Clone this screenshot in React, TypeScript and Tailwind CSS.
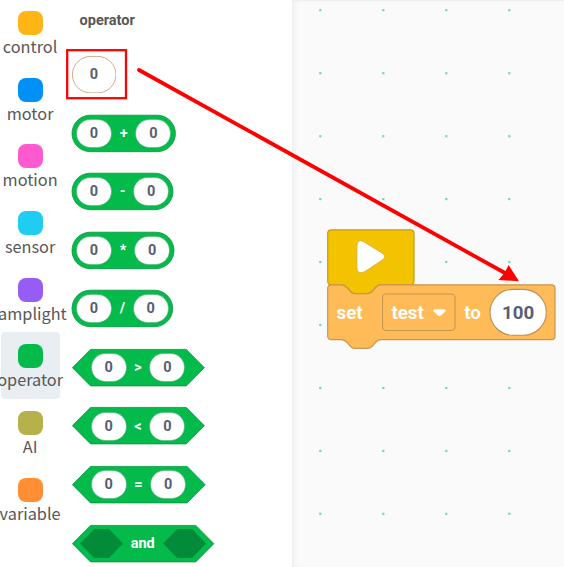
import React from "react";

const categories = [
  { label: "control", color: "bg-[#ffb515]" },
  { label: "motor", color: "bg-[#0190f8]" },
  { label: "motion", color: "bg-[#fd5ad0]" },
  { label: "sensor", color: "bg-[#1fcdf3]" },
  { label: "lamplight", color: "bg-[#965cf6]" },
  { label: "operator", color: "bg-[#03ba4b]", active: true },
  { label: "AI", color: "bg-[#b6b14a]" },
  { label: "variable", color: "bg-[#ff8e35]" },
];

function Sidebar() {
  return (
    <nav className="relative z-10 -mt-px flex w-[61px] shrink-0 flex-col pl-[0.6px] font-['Noto_Sans_CJK_SC',sans-serif]">
      {categories.map((c) => (
        <div
          key={c.label}
          className={`flex h-[66.7px] w-[59px] shrink-0 flex-col items-center rounded-[4px] ${c.active ? "bg-[#e9eef2]" : ""}`}
        >
          <div className={`mt-[12px] h-[24px] w-[25px] shrink-0 rounded-[8px] ${c.color}`} />
          <span className="whitespace-nowrap text-[16.3px] leading-[22px] text-[#575757]">{c.label}</span>
        </div>
      ))}
    </nav>
  );
}

function Slot() {
  return (
    <div className="relative flex h-[29px] w-[36px] shrink-0 items-center justify-center">
      <svg className="absolute inset-0" width="36" height="29">
        <rect x="0.3" y="0.3" width="35.4" height="28.4" rx="14.2" fill="#fff" stroke="#0b9a43" strokeWidth="0.6" />
      </svg>
      <span className="relative pt-[1.6px] text-[14.5px] font-bold leading-none text-[#575e75]">0</span>
    </div>
  );
}

function HexSlot() {
  return (
    <svg width="43" height="29" className="relative shrink-0">
      <path d="M14.3 0H29L43 14.5L29 29H14.3L0 14.5Z" fill="#048b3a" />
    </svg>
  );
}

function Block({ op, width, kind = "round" }: { op: string; width: number; kind?: "round" | "compare" | "logic" }) {
  const w = width;
  const pad = kind === "round" ? "px-[4.3px]" : kind === "compare" ? "px-[19px]" : "px-[8px]";
  return (
    <div className={`relative flex h-[37.3px] items-center justify-between ${pad}`} style={{ width: w }}>
      <svg className="absolute inset-0 overflow-visible" width={w} height="37.3">
        {kind === "round" ? (
          <rect x="0" y="0.2" width={w - 0.8} height="36.5" rx="18.25" fill="#03ba4b" stroke="#079640" strokeWidth="0.8" />
        ) : (
          <path d={`M18.5 0.4H${w - 18.5}L${w - 0.4} 18.65L${w - 18.5} 36.9H18.5L0.4 18.65Z`} fill="#03ba4b" stroke="#079640" strokeWidth="0.8" />
        )}
      </svg>
      {kind === "logic" ? <HexSlot /> : <Slot />}
      <span className="relative pt-[1.6px] text-[14.5px] font-bold leading-none text-white">{op}</span>
      {kind === "logic" ? <HexSlot /> : <Slot />}
    </div>
  );
}

function Palette() {
  return (
    <section className="flex min-w-0 flex-1 flex-col pl-[10.6px]">
      <h2 className="mt-[11px] pl-[8px] text-[14.5px] font-bold leading-[20px] text-[#575757]">operator</h2>
      <div className="mt-[25px] flex flex-col gap-[21.27px]">
        <div className="relative flex h-[37.3px] w-[44.6px] items-center justify-center">
          <svg className="absolute inset-0" width="44.6" height="37.3">
            <rect x="0.4" y="0.4" width="43.5" height="36.5" rx="18.25" fill="#fff" stroke="#c79468" strokeWidth="0.8" />
          </svg>
          <span className="relative pt-[1.6px] text-[14.5px] font-bold leading-none text-[#575e75]">0</span>
          <svg className="absolute -left-[5.6px] -top-[7px]" width="62" height="51">
            <rect x="1.2" y="1.2" width="58.8" height="48" fill="none" stroke="#ff0000" strokeWidth="2.3" />
          </svg>
        </div>
        <Block op="+" width={104.2} />
        <Block op="-" width={101.8} />
        <Block op="*" width={102.8} />
        <Block op="/" width={101.5} />
        <Block op=">" width={132.8} kind="compare" />
        <Block op="<" width={132.8} kind="compare" />
        <Block op="=" width={133.6} kind="compare" />
        <Block op="and" width={142.3} kind="logic" />
      </div>
    </section>
  );
}

function Dots() {
  const xs = [28.3, 91.3, 154.3, 217.3];
  const ys = [10.2, 73.2, 136.2, 199.1, 262, 325, 388, 450.9, 513.8];
  return (
    <svg className="absolute inset-0" width="272" height="567">
      {ys.map((y) => xs.map((x) => <rect key={`${x}-${y}`} x={x - 1.1} y={y - 1.1} width="2.2" height="2.2" fill="#66dbc4" />))}
    </svg>
  );
}

function Workspace() {
  return (
    <main className="relative w-[272px] shrink-0 bg-[#fafafa] shadow-[inset_5px_0_5px_-3px_#eeeeee,inset_0_3px_3px_-3px_#dddddd]">
      <Dots />
      <div className="absolute left-[35px] top-[229px] h-[56px] w-[88px]">
        <svg className="overflow-visible" width="88" height="56">
          <path
            d="M.7 4.5Q.7.8 4.4.8H83.3Q87 .8 87 4.5V52Q87 55.8 83.3 55.8H54C49 55.8 49 59 44.6 63Q43 64.6 41 64.6H27.5Q25.5 64.6 24 63C19.8 59 19.4 55.8 14.6 55.8H4.4Q.7 55.8 .7 52Z"
            fill="#f3c300"
            stroke="#c69c13"
            strokeWidth="1.2"
          />
          <path
            d="M36.5 12.6L55 24Q60.4 27.8 55 31.2L38 42.5Q29.9 46.5 29.9 38V17.5Q30.2 9.5 36.5 12.6Z"
            fill="#fff"
            stroke="#cdae35"
            strokeWidth=".8"
          />
        </svg>
      </div>
      <div className="absolute left-[35px] top-[284px] flex h-[56px] w-[229px] items-center pt-[2px] text-[18.7px] font-bold leading-none text-white">
        <svg className="absolute inset-0 overflow-visible" width="229" height="56">
          <path
            d="M.7 4.5Q.7.8 4.4.8H14.6C19.4.8 19.8 4 24 8Q25.5 9.6 27.5 9.6H41Q43 9.6 44.6 8C49 4 49 .8 54 .8H224.3Q228 .8 228 4.5V51.9Q228 55.6 224.3 55.6H54C49 55.6 49 58.8 44.6 62.8Q43 64.4 41 64.4H27.5Q25.5 64.4 24 62.8C19.8 58.8 19.4 55.6 14.6 55.6H4.4Q.7 55.6 .7 51.9Z"
            fill="#ffbb58"
            stroke="#c6964f"
            strokeWidth="1.2"
          />
          <rect x="55.5" y="10" width="72.5" height="36.5" rx="4" fill="none" stroke="#c6964f" strokeWidth="1.1" />
          <path d="M107.5 25.2H117.5Q119.5 25.8 118.2 27.4L114 31.4Q112.5 32.6 111 31.4L106.8 27.4Q105.5 25.8 107.5 25.2Z" fill="#fff" />
          <rect x="163" y="5.4" width="56.3" height="45.8" rx="22.9" fill="#fff" stroke="#bd8d58" strokeWidth="1.1" />
        </svg>
        <span className="relative w-[54.6px] pl-[9.6px]">set</span>
        <span className="relative w-[82.6px] pl-[9.8px]">test</span>
        <span className="relative w-[26px]">to</span>
        <span className="relative w-[56px] text-center text-[#575e75]">100</span>
      </div>
    </main>
  );
}

export default function App() {
  return (
    <div className="relative flex h-[567px] w-[564px] overflow-hidden bg-white font-[Roboto,sans-serif]">
      <Sidebar />
      <Palette />
      <Workspace />
      <svg className="pointer-events-none absolute inset-0 z-20" width="564" height="567">
        <path d="M139 70L505 273" stroke="#ff0000" strokeWidth="3.8" strokeLinecap="round" fill="none" />
        <path d="M519 281.2L508.6 265L504.6 272.8L498.5 280Z" fill="#ff0000" />
      </svg>
    </div>
  );
}
